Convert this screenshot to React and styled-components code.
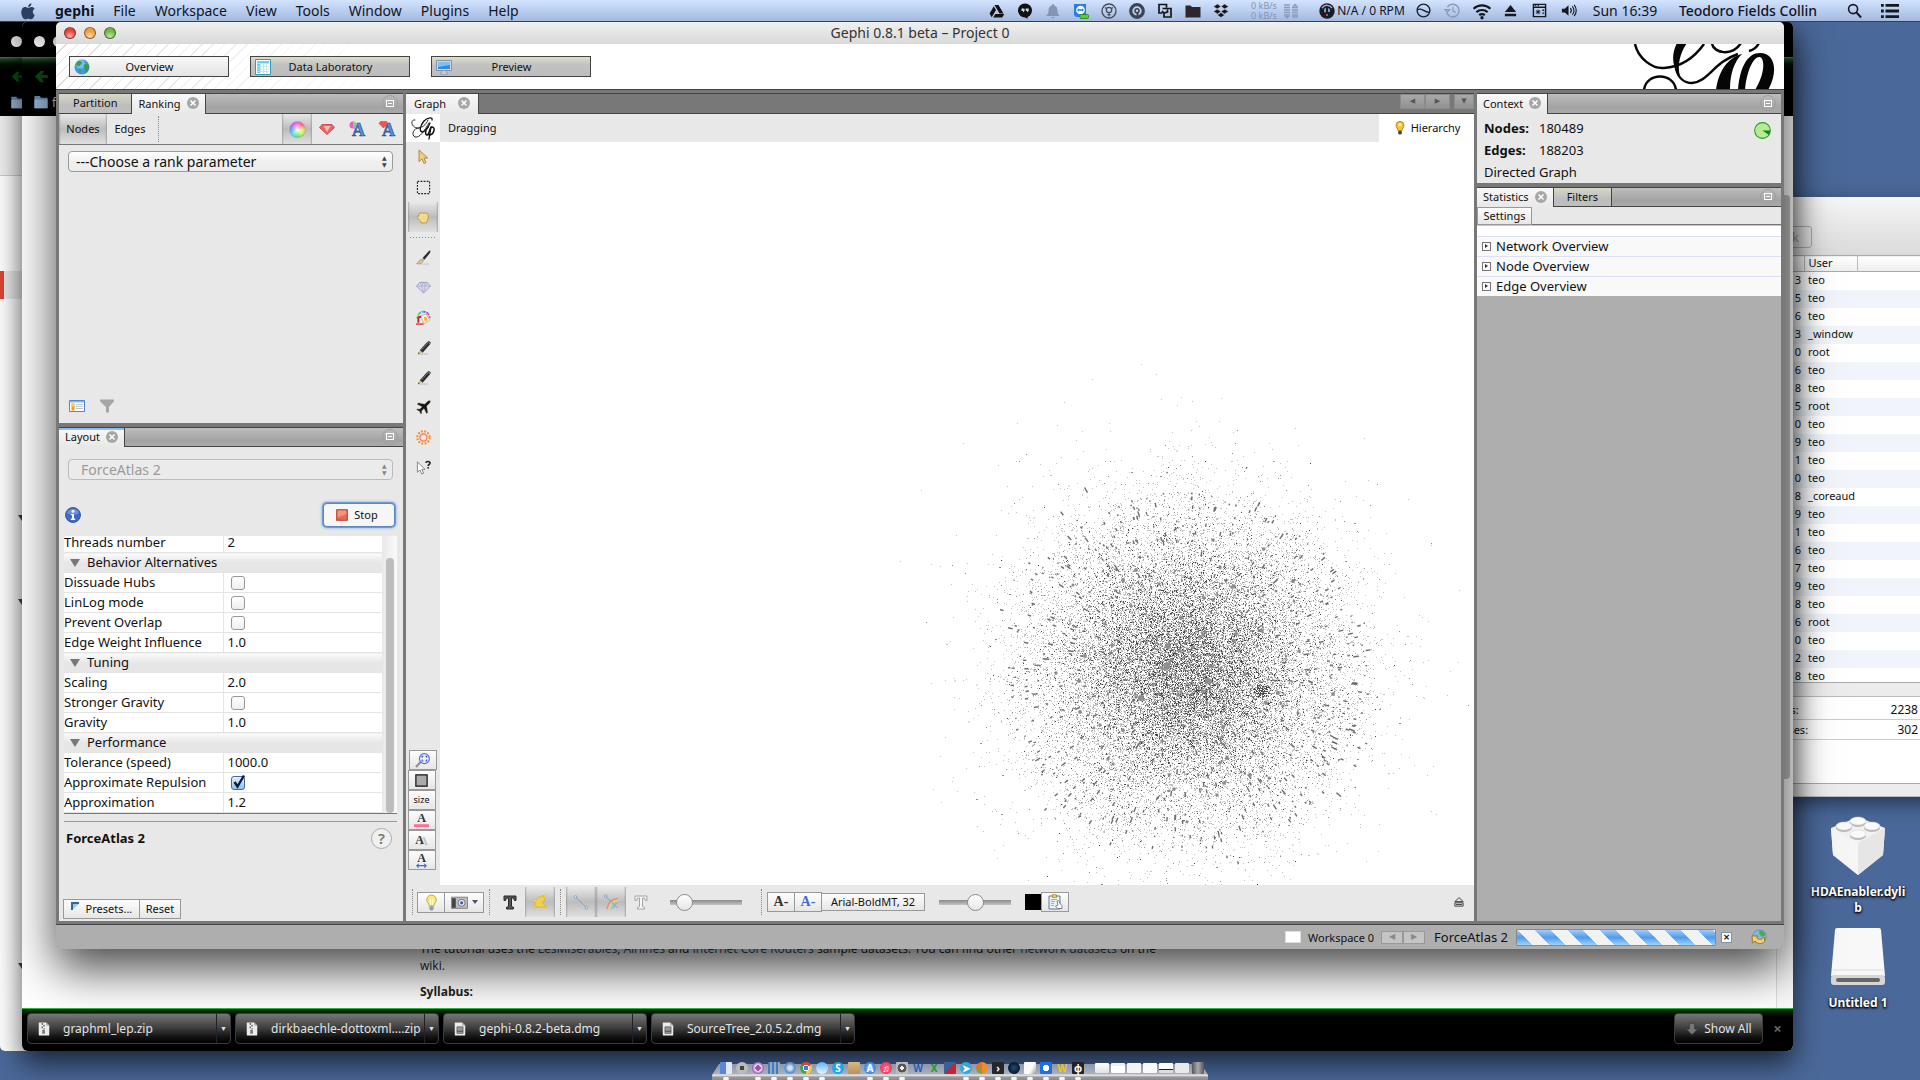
import React from "react";
import styled, { createGlobalStyle, css } from "styled-components";

const GlobalStyle = createGlobalStyle`
  *, *::before, *::after { box-sizing: border-box; }
  html, body { margin: 0; height: 100%; overflow: hidden; }
  body { font-family: "Noto Sans", "Open Sans", sans-serif; font-size: 13px; color: #111; background: #4a6899; }
  button, input, select { font: inherit; color: inherit; margin: 0; }
  button { padding: 0; border: 0; background: none; white-space: nowrap; }
  a { color: inherit; text-decoration: none; }
  p { margin: 0; }
`;

/* ---------- icon drawings, all on a 16 unit grid ---------- */
const penPath = (
  <>
    <path d="M2 15h11" stroke="#bbb" strokeWidth="1" />
    <path d="M4 11 12 2l3 2.500-8 9z" fill="#2c2c2c" />
    <path d="M5.500 11 13 3" stroke="#777" strokeWidth="1" />
    <path d="M12 2l1.500-1.300 2.500 2L15 4.500z" fill="#555" />
    <path d="M4 11l3 2.500L2 15z" fill="#dcc27c" />
    <path d="M3 13l1 1-2 1z" fill="#222" />
  </>
);

const glyphs = {
  apple: <path d="M11 1c-1.500.2-3 1.600-2.800 3.400C9.700 4.500 11.200 2.900 11 1zM14 11.500c-.9 2.300-2 3.900-3.400 3.900-1 0-1.300-.6-2.500-.6s-1.600.6-2.500.6C3.700 15.400 2 12 2 9c0-2.800 1.700-4.500 3.500-4.500 1.100 0 1.900.7 2.700.7s1.700-.8 3.100-.8c.9 0 2 .5 2.600 1.500-2.300 1.400-2 4.500.1 5.600z" fill="#2b3f5e" />,
  drive: <><path d="M5.500 2h4l5 8.500h-4zM4.800 3.300l2.200 3.700-4.300 7.300L.6 10.500zM6.300 11h9l-2.100 3.500H4.200z" fill="#111" /></>,
  hangouts: <><circle cx="8" cy="7.500" r="7" fill="#111" /><path d="M6.500 13h4v3z" fill="#111" /><path d="M4.500 5.500h3V8L6 9.500V8H4.500zM8.700 5.500h3V8l-1.500 1.500V8H8.700z" fill="#c8d8f0" /></>,
  bell: <><path d="M8 1c1 0 1.200.8 1.200 1.500C12 3.300 12.500 6 12.500 8c0 2.500 1 3.500 2.500 5H1c1.500-1.500 2.500-2.500 2.500-5 0-2 .5-4.700 3.300-5.500C6.800 1.800 7 1 8 1z" fill="#8596b4" /><path d="M6.300 14h3.400c-.3 1.700-3 1.700-3.400 0z" fill="#8596b4" /></>,
  teamviewer: <><path d="M1 1h12v13H3L1 12z" fill="#2b7fe0" /><circle cx="7.500" cy="7" r="4.300" fill="#fff" /><path d="M4 7l2-1.700v1h3v-1L11 7 9 8.700v-1H6v1z" fill="#2b7fe0" /><rect x="7" y="11.500" width="8.500" height="4" rx="1" fill="#5bd02c" stroke="#2b7d12" strokeWidth=".8" /></>,
  badge: <><circle cx="8" cy="8" r="7" fill="none" stroke="#454c5a" strokeWidth="1.300" /><circle cx="8" cy="7" r="2.700" fill="none" stroke="#454c5a" strokeWidth="1.200" /><path d="M4 4.500 6 6M12 4.500 10 6M8 10v3.500M6.300 11.800h3.400" stroke="#454c5a" strokeWidth="1.100" /></>,
  ring: <><circle cx="8" cy="8" r="6.300" fill="none" stroke="#3d434f" strokeWidth="3.200" /><circle cx="8" cy="7.800" r="2" fill="none" stroke="#3d434f" strokeWidth="1.500" /><path d="M8.500 9.500v4" stroke="#3d434f" strokeWidth="2" /></>,
  screens: <path d="M9.500 4.500V1.500H2V10h3.500M5.500 5.500h4v0H14V14H7V9.500M5 8l2 2 3.500-1V6.500" fill="none" stroke="#161616" strokeWidth="1.700" />,
  folder: <path d="M.5 2.500h5l1.500 1.500h8.500v10.500H.5z" fill="#2d262a" />,
  dropbox: <path d="M4.500 1 8 3.500 4.200 6 .5 3.500zM11.500 1 8 3.500 11.800 6l3.700-2.500zM4.200 6 8 8.500 4.500 11 .5 8.500zM11.800 6 8 8.500l3.500 2.500 4-2.500zM8 9.500l3.700 2.600L8 14.600l-3.700-2.500z" fill="#1b1518" stroke="#b9cbe9" strokeWidth=".6" />,
  net: <><path d="M1 2h6M1 4.500h6M1 7h6M1 9.500h6M1 12h6M9 4.500h6M9 7h6M9 9.500h6M9 12h6M9 14h6" stroke="#8b9cbc" strokeWidth="1.300" /><path d="M1 13h6l-3 3zM9 3.500h6l-3-3z" fill="#8b9cbc" /></>,
  orb: <><circle cx="8" cy="8" r="7.700" fill="#191c22" /><path d="M3 5c3-4 8-3 10 0" stroke="#aab" strokeWidth="1.500" fill="none" /><path d="M5 9V6l2-1.500v5zM9 9V5l2 1v3z" fill="#6f9de0" /><path d="M7 11h2v2H7z" fill="#c44" /></>,
  wave: <><circle cx="8" cy="8" r="6.800" fill="none" stroke="#1b212b" strokeWidth="1.500" /><path d="M1.500 7c5-2 6 2 12.500 3" stroke="#1b212b" strokeWidth="1.500" fill="none" /></>,
  clock: <><path d="M2.500 4.500a6.800 6.800 0 1 1-.6 6" fill="none" stroke="#8b99b3" strokeWidth="1.500" /><path d="M0 7h5L2.500 9.800zM8.500 4v4.500l3 1.500" fill="none" stroke="#8b99b3" strokeWidth="1.300" /></>,
  wifi: <><path d="M.5 6a11 11 0 0 1 15 0M3 9a7.500 7.500 0 0 1 10 0M5.500 11.700a4 4 0 0 1 5 0" stroke="#16181d" strokeWidth="1.900" fill="none" /><circle cx="8" cy="14" r="1.500" fill="#16181d" /></>,
  eject: <path d="M8 2l6 7.500H2zM2 11.500h12V14H2z" fill="#16181d" />,
  keys: <><path d="M1.500 1.500h13v13h-13zM1.500 4.500h13" fill="none" stroke="#16181d" strokeWidth="1.500" /><path d="M3 2.700h1.500M6 2.700h1.500M4 9.500h5M6.500 7v5M4.700 7.700l3.600 3.600M8.300 7.700l-3.600 3.600" stroke="#16181d" strokeWidth="1" /><path d="M11 7h2v1.500h-2zM11 10h2v1.500h-2z" fill="#16181d" /></>,
  volume: <><path d="M1 6h3l4-3.500v11L4 10H1z" fill="#16181d" /><path d="M10 5.500c1.300 1.500 1.300 3.500 0 5M12 3.500c2.500 2.500 2.500 6.500 0 9M14 2c3 3.500 3 8.500 0 12" stroke="#16181d" strokeWidth="1.200" fill="none" /></>,
  search: <><circle cx="6.500" cy="6.500" r="4.800" fill="none" stroke="#16181d" strokeWidth="1.700" /><path d="M10 10l5 5.500" stroke="#16181d" strokeWidth="2.200" /></>,
  list: <path d="M0 3h2.500M4 3h12M0 8h2.500M4 8h12M0 13h2.500M4 13h12" stroke="#16181d" strokeWidth="2.600" />,
  globe: <><circle cx="8" cy="8" r="7.500" fill="#3f9ae0" /><circle cx="6.500" cy="5" r="4.500" fill="#9bd4ff" opacity=".6" /><path d="M3 3c2-1.500 4-1 5 .5 0 2-2 2-2.500 3.500-1.500.5-3-.5-3.500-1.500zM9.500 6c2-1.500 4-1 5.500 0 .5 3-1 6-3 8-1.500-1.500-.5-3-1.500-4.500zM4 10l3 1-1 3.500z" fill="#3c9d45" /></>,
  table: <><path d="M.5.5h15v15H.5z" fill="#fff" stroke="#3a9ab5" /><path d="M2 2h12v2.500H2zM2 5h3v9H2z" fill="#5fd4f4" /><path d="M5.500 5v9M8.500 5v9M11.500 5v9M2 7.500h12M2 10h12M2 12.500h12" stroke="#bfe3f2" strokeWidth=".9" /></>,
  monitor: <><path d="M.5 1.500h15v10H.5z" fill="#cfd6de" stroke="#8892a0" /><path d="M2 3h12v7H2z" fill="#2f8de0" /><path d="M2 3h12v3L2 8z" fill="#7cc0f7" /><path d="M6 11.500h4V14h1.500v1.500h-7V14H6z" fill="#c9ced6" stroke="#8d949c" strokeWidth=".6" /></>,
  gemRed: <><path d="M3 3.500h10l2.500 3L8 13.500.5 6.500z" fill="#f06464" stroke="#c93a3a" strokeWidth=".8" /><path d="M4.500 5h7L8 11z" fill="#ffb9b9" /></>,
  gem: <><path d="M4 2.500h8l3.500 4L8 14 .5 6.500z" fill="#d5d6ee" stroke="#8e90ae" strokeWidth=".8" /><path d="M.5 6.500h15M4 2.500l2 4L8 14l2-7.500 2-4M6 6.500l2-4 2 4" stroke="#a5a7c6" strokeWidth=".7" fill="none" /></>,
  labelColor: <><text x="3" y="15" fontFamily="Liberation Serif" fontSize="18" fontWeight="700" fill="#5c8fd8" stroke="#234f94" strokeWidth=".7">A</text><circle cx="4" cy="4" r="3.500" fill="#f060b0" /><path d="M4 .5A3.500 3.500 0 0 1 7.500 4H4z" fill="#7be07b" /><path d="M7.500 4A3.500 3.500 0 0 1 4 7.500V4z" fill="#6fb9ff" /></>,
  labelSize: <><text x="3" y="15" fontFamily="Liberation Serif" fontSize="18" fontWeight="700" fill="#5c8fd8" stroke="#234f94" strokeWidth=".7">A</text><path d="M1.500.5h6L9 2.500 4.500 7 0 2.500z" fill="#ee5555" stroke="#c33" strokeWidth=".5" /></>,
  tableSmall: <><path d="M.5 2.500h15v11H.5z" fill="#fff" stroke="#4f86cc" /><path d="M1 3h14v1.500H1z" fill="#8db7ef" /><path d="M2.500 5.500h3v7h-3z" fill="#ff9a1c" /><path d="M2.500 5.500h3v3h-3z" fill="#ffd23e" /><path d="M7 6.500h7M7 8.500h7M7 10.500h7" stroke="#b6bcc6" strokeWidth=".9" /></>,
  funnel: <path d="M1 1.500h14v1.700L10 9v5.500H7V9L1 3.200z" fill="#a5a5a5" />,
  info: <><circle cx="8" cy="8" r="7.500" fill="#3e6cc4" stroke="#27488f" strokeWidth=".8" /><path d="M2 6a6.500 6.500 0 0 1 12 0c-3 2-9 2-12 0z" fill="#7ea2e4" opacity=".7" /><circle cx="8" cy="4.200" r="1.500" fill="#fff" /><path d="M6 7h3v4.500h1.200V13H5.800v-1.500H7V8.300H6z" fill="#fff" /></>,
  stop: <><path d="M1 1h14v14H1z" fill="#ea6a52" stroke="#b43a28" strokeWidth="1.500" /><path d="M2 2h12v5L2 11z" fill="#f7a593" opacity=".7" /></>,
  arrow: <path d="M4 1v11.500l3-2.500 2 4.500 2-1-2-4.200 3.700-.3z" fill="#f0cf7c" stroke="#a9803a" strokeWidth=".9" />,
  marquee: <path d="M1.500 1.500h13v13h-13z" fill="none" stroke="#222" strokeWidth="1.200" strokeDasharray="2 1.300" />,
  hand: <path d="M3 4.500c.5-2 2.300-1.600 2.600-.7.300-1.500 2.300-1.500 2.600 0 .4-1.300 2.200-1.200 2.500.2.700-1 2.300-.6 2.300.8v3c0 3-1.500 3.500-1.500 6H5.500c0-2-1.500-2.300-3-4.300C1 7.500 1 6 3 6.500z" fill="#f2d98c" stroke="#b58e42" strokeWidth=".9" />,
  brush: <><path d="M2 15h12" stroke="#c4c4c4" strokeWidth="1" /><path d="M15.500.5 14 .8 7 8.500l2 2L15 3z" fill="#2b2b2b" /><path d="M7 8.500l2 2-1.500 1.700-2-2z" fill="#a9b3bb" /><path d="M5.500 10.200l2 2C6 15 3 14.800.5 14.500c2-1 2.500-4 5-4.300z" fill="#d8c391" stroke="#8d7a4b" strokeWidth=".5" /></>,
  bucket: <><g fill="none" strokeWidth="2" strokeDasharray="2.200 1"><path d="M1.500 9a6.500 6.500 0 0 1 1.800-5" stroke="#5fd24e" /><path d="M3.300 4A6.500 6.500 0 0 1 8 1.800" stroke="#3fb4d8" /><path d="M8 1.800a6.500 6.500 0 0 1 4.700 2" stroke="#7a5cd6" /><path d="M12.700 3.800A6.500 6.500 0 0 1 14.500 9" stroke="#e04ab4" /></g><path d="M5 6l6-1.500 3.500 6.500-6 3.500z" fill="#fffbe6" stroke="#a88" strokeWidth=".6" /><path d="M8 7.500l3-.5 1.500 4-3 1.500z" fill="#edb73b" /><path d="M1.500 7l4-1v2L3.500 9v4.500H1.500z" fill="#c22" /><path d="M0 15h8" stroke="#d33" strokeWidth="1.500" /></>,
  pencil: penPath,
  plane: <path d="M15.300.8c-.8-.8-2.300-.2-3.200.7L9.300 4.300 2.500 3 1 4.500l5.300 2.800L4 9.700l-2.500-.3L.5 10.500l3 1.500 1.700 3.200 1.200-1-.4-2.600 2.500-2.300 2.700 5.400 1.500-1.500-1.200-6.700 2.800-2.800c.8-.9 1.700-2.100 1-2.900z" fill="#161616" stroke="#d9cf9a" strokeWidth=".4" />,
  heat: <><circle cx="8" cy="8" r="6.600" fill="none" stroke="#ff8a26" strokeWidth="2.200" strokeDasharray="2 1.450" /><circle cx="8" cy="8" r="3.800" fill="none" stroke="#ff7040" strokeWidth="1.300" /></>,
  help: <><path d="M1.500 2v11l2.800-2.300L6.200 15l2-1-2-4h3.500z" fill="#fff" stroke="#777" strokeWidth=".9" /><path d="M10.500 3c.3-2 4.500-2 4.500.3 0 1.500-2 1.500-2 3M13 7.500V9" fill="none" stroke="#222" strokeWidth="1.700" /></>,
  zoomFit: <><path d="M1 15l5.500-6" stroke="#8e8e8e" strokeWidth="2.200" /><circle cx="10" cy="6" r="5.300" fill="#edf2ff" stroke="#5674d6" strokeWidth="1.300" /><path d="M7.500 5V3.500H9M11 3.500h1.500V5M12.500 7v1.500H11M9 8.500H7.500V7" fill="none" stroke="#2f53cc" strokeWidth="1.100" /></>,
  square: <path d="M2 2h12v12H2z" fill="#aaa" stroke="#111" strokeWidth="1.300" />,
  aPink: <><text x="3.500" y="10" fontFamily="Liberation Serif" fontSize="13" fontWeight="700" fill="#333">A</text><path d="M0 12h16v3H0z" fill="#ff6b93" /></>,
  aSize: <><text x="3.500" y="10" fontFamily="Liberation Serif" fontSize="13" fontWeight="700" fill="#333">A</text><path d="M3 13.500h10M5 11.500l-2 2 2 2M11 11.500l2 2-2 2" fill="none" stroke="#4268d8" strokeWidth="1.200" /></>,
  bulb: <><path d="M8 1a4.500 4.500 0 0 0-4.500 4.500C3.500 8 5.500 8.500 5.800 11h4.400c.3-2.500 2.300-3 2.300-5.500A4.500 4.500 0 0 0 8 1z" fill="#f7ea7e" stroke="#b8a233" strokeWidth=".8" /><path d="M7 5v5.500M9 5v5.500" stroke="#fffbd0" strokeWidth="1" /><path d="M6 11.500h4V14l-1 1.500H7L6 14z" fill="#9a9a9a" /></>,
  bulbGold: <><path d="M8 .5A4.500 4.500 0 0 0 3.500 5C3.500 7.500 5.500 8.500 5.800 11h4.400c.3-2.500 2.300-3.500 2.300-6A4.500 4.500 0 0 0 8 .5z" fill="#f6c53a" stroke="#94700f" strokeWidth=".9" /><path d="M8 2.500c-1.500 0-2 1.500-2 3h4c0-1.500-.5-3-2-3z" fill="#fff1a8" /><path d="M6 11.500h4V14l-1 1.500H7L6 14z" fill="#444" /></>,
  camera: <><path d="M.5 3h15v10.500H.5z" fill="#bdbdbd" stroke="#777" strokeWidth=".8" /><path d="M1 4h3.500v9H1z" fill="#444" /><circle cx="10" cy="8.300" r="3.300" fill="#e6e8f4" stroke="#667" strokeWidth=".8" /><circle cx="10" cy="8.300" r="1.500" fill="#4957a8" /></>,
  bigT: <path d="M2 2h12v4.500h-1.500L11.500 4H9.500v8.500l2 .8V15h-7v-1.700l2-.8V4h-2l-1 2.500H2z" fill="#555" stroke="#2b2b2b" strokeWidth="1" />,
  ghostT: <path d="M2 2h12v4.500h-1.500L11.500 4H9.500v8.500l2 .8V15h-7v-1.700l2-.8V4h-2l-1 2.500H2z" fill="#f6f6f6" stroke="#a4a4a4" strokeWidth="1" />,
  hull: <><path d="M6 3.500l6-2 1 5-3 1.500 4 5H3V7z" fill="#eed154" stroke="#dfb92e" strokeWidth="1" /><g fill="#f8e89a" stroke="#d3a51e" strokeWidth=".6"><circle cx="3" cy="6.500" r="1.200" /><circle cx="12.500" cy="2" r="1.200" /><circle cx="14" cy="13" r="1.200" /><circle cx="3" cy="13" r="1.200" /></g></>,
  edge: <><path d="M2.500 3l11 10.500" stroke="#7da2c4" strokeWidth="1" /><circle cx="2.500" cy="3" r="1.400" fill="#cfe4f6" stroke="#6d9bc4" strokeWidth=".8" /><circle cx="13.500" cy="13.500" r="1.400" fill="#cfe4f6" stroke="#6d9bc4" strokeWidth=".8" /></>,
  rainbowEdge: <><g fill="none" strokeWidth="1.500"><path d="M4 15C5 9 9 5 15 4.500" stroke="#e78a86" /><path d="M6 15c1-5 4-8.500 9-9" stroke="#edd27e" /><path d="M8 15c1-4 3-7 7-7.500" stroke="#9fd69a" /><path d="M10 15c.5-3 2-5.500 5-6" stroke="#96b7e6" /></g><path d="M2.500 2l12 12" stroke="#7da2c4" strokeWidth="1" /><circle cx="2.500" cy="2" r="1.300" fill="#cfe4f6" stroke="#6d9bc4" strokeWidth=".8" /></>,
  clipboard: <><path d="M2 2h11v13H2z" fill="#e9f0f8" stroke="#5f7898" strokeWidth="1" /><path d="M5.500.8h4v2.500h-4z" fill="#f6dc8d" stroke="#b98a22" strokeWidth="1" /><path d="M4 5.500h6M4 7.500h4M4 9.500h3M4 11.500h3" stroke="#8fa7c4" strokeWidth=".9" /><path d="M10 7c1.500-.8 3 .3 2.500 2l2.500 2.500v3h-4.500l-2-2.500 2.500-.8z" fill="#fff" stroke="#6c7684" strokeWidth=".9" /></>,
  pullUp: <path d="M8 2l5.500 5.500h-11zM2.500 9h11v4.500h-11zM4 11.300h8" fill="#ddd" stroke="#45454c" strokeWidth="1.300" />,
  pie: <><circle cx="8" cy="8" r="7.400" fill="#b6eb92" stroke="#2c9b2c" strokeWidth="1" /><path d="M8 8h7.200a7 7 0 0 1-1.500 4z" fill="#127e1d" /></>,
  refresh: <><circle cx="8.500" cy="7.500" r="6.800" fill="#82b7dc" stroke="#54829e" strokeWidth=".6" /><path d="M8 1.500c3-.5 6 1.500 6.500 4.500L11 8 8.500 5z" fill="#4da84b" /><path d="M1 7h6L5.500 8.800C8 11 11 11 13.500 8v4.500c-2.500 3-6.500 3-9.500-.5L1.500 14z" fill="#f1cd76" stroke="#9c7320" strokeWidth=".9" /></>,
  file: <><path d="M2 .5h8.500L14 4v11.500H2z" fill="#ececec" /><path d="M10.500.5V4H14z" fill="#aaa" /><path d="M6 1v2M8 3v2M6 5v2M8 7v1.500" stroke="#666" strokeWidth="1.600" /><path d="M6 9h3v4.500H6z" fill="#777" /></>,
  disk: <><path d="M2 .5h8.500L14 4v11.500H2z" fill="#ececec" /><path d="M10.500.5V4H14z" fill="#aaa" /><path d="M4.500 5.500h7V13h-7z" fill="#999" stroke="#555" strokeWidth=".8" /><path d="M4.500 10.500h7" stroke="#444" /></>,
  downArrow: <path d="M5 1.500h6V8h3.500L8 14.500 1.500 8H5z" fill="#777" stroke="#333" strokeWidth=".7" />,
  back: <path d="M15 6.500H8L11 2H7L1 8l6 6h4L8 9.500h7z" fill="#06500f" />,
  bookFolder: <><path d="M.5 1h6L8 3h7.500v12H.5z" fill="#6f94bd" /><path d="M.5 5h15v10H.5z" fill="#9dbcdd" /></>,
};

const Svg = styled.svg`
  display: block;
  flex: none;
  overflow: visible;
  width: ${(p) => p.$size || 16}px;
  height: ${(p) => p.$size || 16}px;
`;
const Icon = ({ name, size }) => (
  <Svg $size={size} viewBox="0 0 16 16" aria-hidden="true">
    {glyphs[name]}
  </Svg>
);

/* ---------- menu bar ---------- */
const MenuBar = styled.header`
  position: relative;
  z-index: 5;
  display: flex;
  align-items: center;
  height: 22px;
  padding-left: 19px;
  font-size: 14px;
  line-height: 20px;
  color: #10151f;
  background: linear-gradient(#d3e3ff, #bfd2f3 40%, #a3b9dc);
  border-bottom: 1px solid #2f4263;
`;
const MenuList = styled.nav`
  display: flex;
  gap: 19px;
  padding-left: 18px;
`;
const MenuItem = styled.button`
  font-weight: ${(p) => (p.$strong ? 700 : 400)};
`;
const StatusItems = styled.div`
  display: flex;
  align-items: center;
  margin-left: auto;
`;
const Slot = styled.span`
  display: flex;
  align-items: center;
  justify-content: center;
  gap: ${(p) => p.$gap || 0}px;
  width: ${(p) => p.$w}px;
  white-space: nowrap;
  font-size: ${(p) => p.$font || 14}px;
  font-weight: ${(p) => (p.$strong ? 500 : 400)};
`;
const Rates = styled.span`
  display: flex;
  flex-direction: column;
  font: 9px/10px "Noto Sans", sans-serif;
  color: #8394b5;
`;

/* ---------- background windows ---------- */
const Desktop = styled.main`
  position: relative;
  height: calc(100vh - 22px);
  min-height: 700px;
  overflow: hidden;
`;
const Window = styled.section`
  position: absolute;
  display: flex;
  flex-direction: column;
  overflow: hidden;
`;
const BackWindow = styled(Window)`
  top: 0;
  left: 0;
  width: 400px;
  bottom: 29px;
  background: #fff;
  border-radius: 0 0 5px 5px;
`;
const BrowserWindow = styled(Window)`
  top: 0;
  left: 22px;
  right: 127px;
  bottom: 29px;
  background: #fff;
  border-radius: 5px 5px 6px 6px;
  box-shadow: 0 12px 28px rgba(0, 0, 0, 0.65);
`;
const DarkHead = styled.div`
  flex: none;
  height: 94px;
  padding-left: ${(p) => p.$pad}px;
  background: linear-gradient(#000 35px, #6d6d6d 35px, #1c4a1c 37px, #021002 42px, #000 50px);
`;
const HeadRow = styled.div`
  display: flex;
  align-items: center;
  gap: ${(p) => p.$gap}px;
  height: ${(p) => p.$h}px;
  color: #ddd;
  font-size: 12px;
`;
const Dot = styled.i`
  width: 11px;
  height: 11px;
  border-radius: 50%;
  background: linear-gradient(#ddd, #fff);
`;
const BackToolbar = styled.div`
  height: 60px;
  background: #efefef;
  border-bottom: 1px solid #ccc;
`;
const BackBody = styled.div`
  display: flex;
  flex-direction: column;
  flex: 1;
  padding-top: 95px;
`;
const RedMark = styled.div`
  height: 28px;
  border-left: 4px solid #dc4437;
  background: #e8e8e8;
  flex: none;
`;
const Outline = styled.div`
  display: flex;
  flex-direction: column;
  padding: 216px 0 0 18px;
`;
const OutlineMark = styled.i`
  width: 8px;
  height: 6px;
  margin-bottom: ${(p) => p.$after}px;
  border: 4px solid transparent;
  border-top: 6px solid #444;
  border-bottom: 0;
`;
const BrowserPage = styled.div`
  display: flex;
  flex: 1;
  min-height: 0;
  align-items: stretch;
`;
const Article = styled.article`
  display: flex;
  flex: 1;
  flex-direction: column;
  justify-content: flex-end;
  padding: 0 0 8px 398px;
  font-family: "Open Sans", sans-serif;
  font-size: 12px;
  line-height: 17px;
  color: #222;
  p + p { margin-top: 9px; }
  a { color: #1a5276; }
`;
const PageScroll = styled.div`
  width: 17px;
  padding-top: 79px;
  border-left: 1px solid #ddd;
  background: #fafafa;
  &::before {
    content: "";
    display: block;
    width: 8px;
    height: 584px;
    margin-left: 5px;
    border-radius: 4px;
    background: #bdbdbd;
  }
`;
const DownloadBar = styled.footer`
  display: flex;
  flex: none;
  gap: 4px;
  height: 43px;
  padding: 4px 5px;
  background: linear-gradient(#063c0b, #000 8px);
  border-top: 1px solid #2fb53f;
`;
const darkButton = css`
  height: 31px;
  color: #e4e4e4;
  font-size: 12px;
  border: 1px solid #3d3d3d;
  border-radius: 4px;
  background: linear-gradient(#787878, #3c3c3c 50%, #111 80%, #000);
`;
const Download = styled.div`
  display: flex;
  width: 204px;
  ${darkButton}
`;
const DownloadName = styled.button`
  display: flex;
  flex: 1;
  align-items: center;
  gap: 12px;
  padding-left: 9px;
`;
const DownloadMore = styled.button`
  width: 14px;
  font-size: 7px;
  border-left: 1px solid #222;
`;
const ShowAll = styled.button`
  display: flex;
  align-items: center;
  justify-content: center;
  gap: 5px;
  width: 89px;
  margin-left: auto;
  ${darkButton}
`;
const CloseBar = styled.button`
  width: 21px;
  padding-bottom: 4px;
  color: #666;
  font-size: 15px;
  font-weight: 700;
`;

const MonitorWindow = styled(Window)`
  top: 175px;
  right: -60px;
  width: 260px;
  height: 600px;
  background: #fff;
  font-size: 11px;
  box-shadow: 0 6px 18px rgba(0, 0, 0, 0.5);
`;
const MonitorHead = styled.div`
  flex: none;
  height: 58px;
  padding: 29px 0 0 14px;
  background: linear-gradient(#f6f6f6, #dadada);
  button { width: 78px; height: 22px; text-align: right; padding-right: 12px; color: #999; font-size: 13px; border: 1px solid #aaa; border-radius: 3px; }
`;
const ProcessList = styled.div`
  flex: none;
  height: 427px;
  overflow: hidden;
`;
const ProcessTable = styled.table`
  border-collapse: collapse;
  table-layout: fixed;
  width: 100%;
  thead tr { height: 16px; background: linear-gradient(#fff, #eee); border-top: 1px solid #aaa; border-bottom: 1px solid #aaa; }
  tbody tr { height: 18px; }
  tbody tr:nth-child(even) { background: #f1f5fb; }
  th { font-weight: 400; text-align: left; padding: 0 0 1px 4px; border-right: 1px solid #bbb; line-height: 14px; }
  td { padding: 0 0 2px 4px; line-height: 14px; }
  td:first-child { padding: 0 3px 2px 0; text-align: right; }
`;
const Strip = styled.div`
  flex: none;
  height: ${(p) => p.$h}px;
  background: #ececec;
  border-top: 1px solid #aaa;
  border-bottom: 1px solid #bbb;
`;
const Totals = styled.dl`
  flex: 1;
  margin: 0;
  padding-top: 3px;
  div { display: flex; justify-content: space-between; height: 20px; padding: 0 62px 0 34px; align-items: center; border-bottom: 1px solid #ccc; }
  dd { margin: 0; font-size: 12px; }
`;

const DesktopIcons = styled.aside`
  position: absolute;
  top: 793px;
  right: 9px;
  width: 106px;
  display: flex;
  flex-direction: column;
  align-items: center;
  gap: 10px;
`;
const DesktopIcon = styled.button`
  display: flex;
  flex-direction: column;
  align-items: center;
  gap: 7px;
  width: 100px;
  white-space: normal;
  word-break: break-all;
  color: #fff;
  font-size: 12px;
  line-height: 16px;
  font-weight: 700;
  text-shadow: 0 1px 2px #000, 0 1px 3px #000;
`;

/* ---------- gephi window ---------- */
const GephiWindow = styled(Window)`
  top: 0;
  left: 56px;
  right: 136px;
  bottom: 131px;
  background: #787878;
  border-radius: 5px 5px 2px 2px;
`;
const GephiShadow = styled.div`
  position: absolute;
  top: 0;
  left: 56px;
  right: 136px;
  bottom: 131px;
  box-shadow: 0 20px 44px rgba(0, 0, 0, 0.72);
`;
const TitleBar = styled.div`
  display: flex;
  flex: none;
  align-items: center;
  height: 22px;
  padding: 0 8px;
  background: linear-gradient(#f0f0f0, #d9d9d9);
`;
const Lights = styled.div`
  display: flex;
  flex: 1;
  gap: 8px;
`;
const Light = styled.button`
  width: 12px;
  height: 12px;
  border-radius: 50%;
  border: 1px solid rgba(60, 30, 20, 0.55);
  background: radial-gradient(circle at 50% 85%, #fff9 0, transparent 60%), ${(p) => p.$c};
`;
const Title = styled.h1`
  margin: 0;
  font-size: 14px;
  line-height: 20px;
  font-weight: 400;
  color: #333;
`;
const Banner = styled.div`
  display: flex;
  flex: none;
  align-items: center;
  gap: 21px;
  height: 46px;
  padding-left: 13px;
  background: linear-gradient(90deg, transparent, #fff 340px),
    repeating-linear-gradient(135deg, #fff 0 7px, #ddd 7px 8px);
  border-bottom: 1px solid #444;
`;
const ModeButton = styled.button`
  display: flex;
  align-items: center;
  width: 160px;
  height: 21px;
  padding: 0 4px;
  font-size: 11px;
  border: 1px solid #444;
  background: ${(p) => (p.$on ? "linear-gradient(#f8f8f8, #e4e4e4)" : "linear-gradient(#dcdfca, #c2c2c2 40%, #bcbcbc)")};
  span { flex: 1; padding-right: 15px; text-align: center; }
`;
const BannerLogo = styled.svg`
  width: 150px;
  height: 45px;
  margin-left: auto;
  margin-right: 4px;
`;
const Workspace = styled.div`
  display: flex;
  flex: 1;
  min-height: 0;
  gap: 3px;
  padding: 3px;
`;
const Column = styled.div`
  display: flex;
  flex-direction: column;
  flex: ${(p) => (p.$w ? "none" : 1)};
  width: ${(p) => (p.$w ? p.$w + "px" : "auto")};
  min-width: 0;
  gap: 4px;
`;
const Panel = styled.section`
  display: flex;
  flex-direction: column;
  flex: ${(p) => (p.$h ? "none" : 1)};
  height: ${(p) => (p.$h ? p.$h + "px" : "auto")};
  min-height: 0;
  background: #e8e8e8;
`;
const TabBar = styled.div`
  display: flex;
  flex: none;
  height: ${(p) => p.$h || 21}px;
  border-top: 1px solid #444;
  border-bottom: 1px solid #444;
  background: ${(p) => (p.$flat ? "#787878" : "linear-gradient(#bdbdbd, #a3a3a3 70%, #aaa)")};
`;
const Tab = styled.button`
  display: flex;
  align-items: center;
  gap: 6px;
  margin-bottom: ${(p) => (p.$on ? -1 : 0)}px;
  padding: 0 ${(p) => p.$pad || 6}px 2px;
  font-size: 11px;
  border-right: 1px solid #444;
  background: ${(p) => (p.$on ? "linear-gradient(#f8f8f8, #e8e8e8)" : "linear-gradient(#d6d8c6, #bebebe 60%)")};
  ${(p) => p.$accent && "box-shadow: inset 0 2px #8fbdf0;"}
`;
const CloseDot = styled.i`
  display: grid;
  place-items: center;
  width: 12px;
  height: 12px;
  border-radius: 50%;
  background: #a6a6a6;
`;
const Close = () => (
  <CloseDot>
    <Svg $size={6} viewBox="0 0 6 6"><path d="M.5.5l5 5M5.500.5l-5 5" stroke="#fff" strokeWidth="1.500" /></Svg>
  </CloseDot>
);
const Restore = styled.button`
  display: grid;
  place-items: center;
  align-self: center;
  width: 16px;
  height: 16px;
  margin: 0 5px 1px auto;
  border-radius: 50%;
  border: 1px solid #a0a0a0;
  &::before { content: ""; width: 8px; height: 7px; border: 1px solid #fff; background: linear-gradient(#fff, #fff) center / 4px 1px no-repeat; }
`;
const RestoreButton = () => <Restore aria-label="Restore" />;
const Row = styled.div`
  display: flex;
  flex: none;
  align-items: center;
  height: ${(p) => p.$h}px;
  padding: ${(p) => p.$p || 0};
  gap: ${(p) => p.$gap || 0}px;
  ${(p) => p.$line && "border-bottom: 1px solid #777;"}
`;
const Toggle = styled.button`
  display: grid;
  place-items: center;
  width: ${(p) => p.$w || 30}px;
  height: 30px;
  flex: none;
  padding-bottom: ${(p) => (p.$w ? 2 : 0)}px;
  font-size: 11px;
  ${(p) =>
    p.$on &&
    css`
      background: linear-gradient(90deg, #8889 0, transparent 2px calc(100% - 2px), #8889), linear-gradient(#e8e8e8, #bcbcbc 50%, #e0e0e0);
    `}
`;
const Dotted = styled.i`
  flex: none;
  height: 26px;
  border-left: 1px dotted #888;
  margin: 0 ${(p) => p.$m || 0}px;
`;
const Push = styled.span`
  margin-left: auto;
`;
const Gap = styled.span`
  flex: none;
  width: ${(p) => p.$w}px;
`;
const ListActions = styled.div`
  display: flex;
  gap: 14px;
  margin-top: auto;
  padding: 0 0 9px 10px;
`;
const Wheel = styled.i`
  width: 17px;
  height: 17px;
  border-radius: 50%;
  border: 1px solid #aaa;
  background: radial-gradient(#fff, transparent 70%),
    conic-gradient(#f4e, #f55, #fc4, #af4, #4e6, #4df, #58f, #a5f, #f4e);
`;
const SelectWrap = styled.label`
  position: relative;
  display: block;
  margin: ${(p) => p.$m};
  &::after {
    content: "▲ ▼";
    position: absolute;
    right: 5px;
    top: 3px;
    width: 6px;
    font: 6px/7px "DejaVu Sans", sans-serif;
    color: ${(p) => (p.$off ? "#888" : "#444")};
    pointer-events: none;
  }
`;
const Select = styled.select`
  display: block;
  appearance: none;
  width: 100%;
  height: 21px;
  padding: 0 ${(p) => p.$pad}px;
  font-size: 14px;
  line-height: 19px;
  border: 1px solid #9a9a9a;
  border-radius: 4px;
  background: linear-gradient(#fff, #f0f0f0 50%, #ebebeb);
  &:disabled { color: #9a9a9a; opacity: 1; border-color: #bbb; background: #ebebeb; }
`;
const StopButton = styled.button`
  display: flex;
  align-items: center;
  justify-content: center;
  gap: 6px;
  width: 72px;
  height: 24px;
  margin-left: auto;
  padding-right: 4px;
  font-size: 11px;
  border: 1px solid #5a87c0;
  border-radius: 4px;
  background: #f6f6f6;
  box-shadow: 0 0 0 1px #6f9bd1, 0 0 3px 1px #7aa6dc;
`;
const PropertyPane = styled.div`
  display: flex;
  height: 278px;
  margin: 0 6px 0 5px;
  border-bottom: 1px solid #4a78d4;
`;
const PropertyClip = styled.div`
  display: flex;
  flex: 1;
  flex-direction: column;
  justify-content: flex-end;
  overflow: hidden;
`;
const PropertyTable = styled.table`
  flex: none;
  width: 100%;
  border-collapse: collapse;
  table-layout: fixed;
  background: #fff;
  tr { height: 20px; }
  th, td { padding: 0; font-weight: 400; text-align: left; line-height: 19px; border-bottom: 1px solid #e4e4e4; }
  td { padding-left: 4px; border-left: 1px solid #e4e4e4; }
  th[colspan] { background: linear-gradient(#fbfbfb, #e6e6e6 50%); }
`;
const GroupButton = styled.button`
  display: flex;
  align-items: center;
  gap: 7px;
  height: 19px;
  padding-left: 6px;
  &::before { content: ""; border: 5px solid transparent; border-top: 8px solid #777; border-bottom: 0; }
`;
const Check = styled.input`
  appearance: none;
  display: block;
  width: 14px;
  height: 14px;
  margin: 0 0 0 3px;
  border: 1px solid #999;
  border-radius: 3px;
  background: linear-gradient(#fff, #eee);
  &:checked { border-color: #456ba8; background: linear-gradient(#e6f1ff, #8fc0f5); }
`;
const CheckCell = styled.label`
  display: flex;
  align-items: center;
  position: relative;
  svg { position: absolute; left: 3px; top: -2px; pointer-events: none; }
`;
const PaneScroll = styled.div`
  width: 15px;
  padding: 22px 3px 0 4px;
  background: linear-gradient(90deg, #e8e8e8, #fafafa);
  &::before { content: ""; display: block; width: 8px; height: 255px; border-radius: 4px; background: #bdbdbd; }
`;
const Description = styled.div`
  display: flex;
  flex: 1;
  align-items: flex-start;
  justify-content: space-between;
  margin: 7px 6px 0 5px;
  padding: 6px 5px 6px 2px;
  border-top: 1px solid #999;
  strong { line-height: 20px; }
`;
const HelpButton = styled.button`
  width: 21px;
  height: 21px;
  border: 1px solid #aaa;
  border-radius: 50%;
  font-weight: 600;
  font-size: 15px;
  line-height: 19px;
  color: #777;
  background: #f0f0f0;
`;
const SmallButton = styled.button`
  display: flex;
  align-items: center;
  justify-content: center;
  gap: 4px;
  flex: none;
  width: ${(p) => p.$w}px;
  height: ${(p) => p.$h || 20}px;
  font-size: ${(p) => p.$font || 11}px;
  line-height: 16px;
  border: 1px solid #999;
  background: linear-gradient(#fdfdfd, #e6e6e6);
  & + & { margin-left: ${(p) => (p.$stack ? 0 : -1)}px; }
`;
const Corner = styled.i`
  align-self: flex-start;
  margin-top: 2px;
  width: 8px;
  height: 8px;
  border-top: 2px solid #2b6aa8;
  border-left: 2px solid #2b6aa8;
  background: linear-gradient(135deg, #9cc8ef 45%, transparent 45%);
`;

/* ---------- graph area ---------- */
const NavButton = styled.button`
  width: ${(p) => p.$w || 25}px;
  height: 15px;
  margin-left: ${(p) => p.$ml || 0}px;
  font: 7px/13px "DejaVu Sans", sans-serif;
  color: #555;
  border: 1px solid #8b8b8b;
  background: linear-gradient(#a8a8a8, #929292);
`;
const GraphBody = styled.div`
  display: flex;
  flex: 1;
  min-height: 0;
`;
const ToolStrip = styled.div`
  display: flex;
  flex: none;
  flex-direction: column;
  align-items: center;
  width: 34px;
  button, span { flex: none; }
`;
const LogoCell = styled.div`
  flex: none;
  width: 34px;
  height: 28px;
  background: #fff;
`;
const ToolDots = styled.i`
  flex: none;
  width: 26px;
  height: 10px;
  background: linear-gradient(90deg, #888 1px, transparent 1px) 0 5px / 3px 1px repeat-x;
`;
const StripButtons = styled.div`
  display: flex;
  flex-direction: column;
  margin: auto 1px 15px 0;
`;
const GraphMain = styled.div`
  display: flex;
  flex: 1;
  flex-direction: column;
  min-width: 0;
`;
const GraphStatus = styled.div`
  display: flex;
  flex: none;
  align-items: center;
  justify-content: space-between;
  height: 28px;
  padding-left: 8px;
  font-size: 11px;
  span { padding-bottom: 1px; }
`;
const Hierarchy = styled.button`
  display: flex;
  align-items: center;
  justify-content: center;
  gap: 4px;
  width: 95px;
  height: 28px;
  font-size: 11px;
  background: #fff;
`;
const GraphCanvas = styled.div`
  display: flex;
  flex: 1;
  min-height: 0;
  justify-content: flex-end;
  align-items: flex-end;
  overflow: hidden;
  background: #fff;
`;
const GraphSvg = styled.svg`
  display: block;
  flex: none;
  width: 640px;
  height: 600px;
`;
const BottomBar = styled.div`
  display: flex;
  flex: none;
  align-items: center;
  height: 36px;
  padding: 0 0 2px 6px;
`;
const Range = styled.input`
  appearance: none;
  flex: none;
  width: 72px;
  height: 18px;
  margin: 0 ${(p) => p.$m}px;
  background: linear-gradient(#8a8a8a, #c4c4c4) center / 100% 5px no-repeat;
  &::-webkit-slider-thumb {
    appearance: none;
    width: 17px;
    height: 17px;
    border: 1px solid #8b8b8b;
    border-radius: 50%;
    background: linear-gradient(#fff, #e6e6e6);
  }
`;
const Serif = styled.b`
  font-family: "Liberation Serif", serif;
  font-size: ${(p) => (p.$shadow ? 12 : 14)}px;
  color: ${(p) => p.$c};
  ${(p) => p.$shadow && "padding-right: 4px; text-shadow: 4px 1px #c4c4c4;"}
`;
const Swatch = styled.button`
  width: 16px;
  height: 16px;
  background: #000;
`;
const Caret = styled.i`
  border: 3px solid transparent;
  border-top: 4px solid #4a5568;
  border-bottom: 0;
`;

/* ---------- right side ---------- */
const Facts = styled.dl`
  margin: 0;
  padding: 3px 7px;
  line-height: 22px;
  div { display: flex; }
  dt { width: 55px; font-weight: 700; }
  dd { margin: 0; }
`;
const ContextBody = styled.div`
  display: flex;
  justify-content: space-between;
  padding-right: 10px;
  svg { margin-top: 8px; }
`;
const StatsLead = styled.div`
  flex: none;
  height: 11px;
  background: #fff;
  border-top: 1px solid #b9c4ec;
`;
const StatsGroup = styled.button`
  display: flex;
  flex: none;
  align-items: center;
  gap: 5px;
  height: 20px;
  padding: 0 0 1px 5px;
  font-size: 13px;
  line-height: 18px;
  background: #f9f9f9;
  border-top: 1px solid #dde1f5;
`;
const Expander = styled.i`
  display: grid;
  place-items: center;
  width: 9px;
  height: 9px;
  border: 1px solid #777;
  &::before { content: ""; border: 2px solid transparent; border-left: 3px solid #333; border-right: 0; }
`;
const StatsRest = styled.div`
  flex: 1;
  background: #aeaeae;
`;
const StatusBar = styled.footer`
  display: flex;
  flex: none;
  align-items: center;
  justify-content: flex-end;
  height: 25px;
  padding-right: 17px;
  background: #aeaeae;
  border-top: 1px solid #444;
`;
const WorkspaceIcon = styled.i`
  width: 16px;
  height: 12px;
  margin-right: 7px;
  border: 1px solid #ddd;
  background: #fff;
`;
const WorkspaceName = styled.span`
  margin-right: 7px;
  font-size: 11px;
`;
const PageButton = styled.button`
  width: 22px;
  height: 13px;
  font: 8px/10px "DejaVu Sans", sans-serif;
  color: #8a8a8a;
  border: 1px solid #999;
  background: #c4c4c4;
`;
const TaskName = styled.span`
  margin: 0 8px 0 9px;
`;
const Progress = styled.div`
  width: 200px;
  height: 17px;
  border: 1px solid #888;
  border-radius: 1px;
  background: repeating-linear-gradient(45deg, transparent 0 11px, #f2f2f2 11px 23px),
    linear-gradient(#a9c9f5, #4f9dee 50%, #9bd3fb);
`;
const CancelTask = styled.button`
  width: 11px;
  height: 11px;
  margin: 0 19px 0 5px;
  font: 700 9px/9px "DejaVu Sans", sans-serif;
  border: 1px solid #7f93a8;
  background: #fff;
`;

/* ---------- dock ---------- */
const Dock = styled.nav`
  position: absolute;
  bottom: 0;
  left: 50%;
  transform: translateX(-50%);
  display: flex;
  align-items: flex-start;
  width: 496px;
  height: 20px;
  padding: 1px 6px 0 6px;
  &::before {
    content: "";
    position: absolute;
    inset: 4px 0 0 0;
    clip-path: polygon(7px 0, calc(100% - 7px) 0, 100% 11px, 100% 100%, 0 100%, 0 11px);
    background: linear-gradient(#8c97ac, #aab0bd 10px, #f3f3f3 11px, #999 13px, #8a8a8a);
  }
`;
const DockItem = styled.button`
  position: relative;
  flex: none;
  display: grid;
  place-items: center;
  width: 16px;
  height: 14px;
  margin-left: ${(p) => (p.$gap ? 8 : 0)}px;
  color: #fff;
  &::after {
    content: "";
    position: absolute;
    top: 16px;
    width: 6px;
    height: 3px;
    border-radius: 2px;
    background: ${(p) => (p.$run ? "#e9f8ff" : "transparent")};
  }
`;
const DockTile = styled.i`
  display: grid;
  place-items: center;
  width: ${(p) => (p.$wide ? 14 : 12)}px;
  height: ${(p) => (p.$wide ? 10 : 12)}px;
  border-radius: ${(p) => (p.$round ? 6 : 1)}px;
  font: 700 10px/12px "Noto Sans", sans-serif;
  background: ${(p) => p.$bg};
  color: ${(p) => p.$fg || "#fff"};
`;

/* ---------- data ---------- */
const menus = ["gephi", "File", "Workspace", "View", "Tools", "Window", "Plugins", "Help"];
const trayLeft = ["drive", "hangouts", "bell", "teamviewer", "badge", "ring", "screens", "folder", "dropbox"];
const trayRight = ["wave", "clock", "wifi", "eject", "keys", "volume"];
const properties = [
  ["Threads number", "2"],
  ["Behavior Alternatives"],
  ["Dissuade Hubs", false],
  ["LinLog mode", false],
  ["Prevent Overlap", false],
  ["Edge Weight Influence", "1.0"],
  ["Tuning"],
  ["Scaling", "2.0"],
  ["Stronger Gravity", false],
  ["Gravity", "1.0"],
  ["Performance"],
  ["Tolerance (speed)", "1000.0"],
  ["Approximate Repulsion", true],
  ["Approximation", "1.2"],
];
const processes = [
  ["3", "teo"], ["5", "teo"], ["6", "teo"], ["3", "_window"], ["0", "root"], ["6", "teo"], ["8", "teo"], ["5", "root"],
  ["0", "teo"], ["9", "teo"], ["1", "teo"], ["0", "teo"], ["8", "_coreaud"], ["9", "teo"], ["1", "teo"], ["6", "teo"],
  ["7", "teo"], ["9", "teo"], ["8", "teo"], ["6", "root"], ["0", "teo"], ["2", "teo"], ["8", "teo"],
];
const downloads = [
  ["file", "graphml_lep.zip"],
  ["file", "dirkbaechle-dottoxml....zip"],
  ["disk", "gephi-0.8.2-beta.dmg"],
  ["disk", "SourceTree_2.0.5.2.dmg"],
];
const tools = ["brush", "gem", "bucket", "pencil", "pencil", "plane", "heat", "help"];
const dockItems = [
  { bg: "linear-gradient(90deg,#5b86d8 50%,#dfe8f6 50%)", run: 1 },
  { bg: "radial-gradient(#444 25%,#bbb 30%)", round: 1 },
  { bg: "radial-gradient(#a050b0 30%,#eee 35%,#9a4fb0 70%)", round: 1, run: 1 },
  { bg: "repeating-linear-gradient(90deg,#3f7dc0 0 2px,#9ab 2px 4px)", run: 1 },
  { bg: "radial-gradient(#dde 20%,#4b8fd0 60%,#ccc)", round: 1, run: 1 },
  { bg: "radial-gradient(#3b7de0 25%,#fff 27% 36%,transparent 38%),conic-gradient(#dc4437 0 60deg,#f7cb3a 60deg 180deg,#3aa757 180deg 300deg,#dc4437 300deg)", round: 1, run: 1 },
  { bg: "linear-gradient(#5db4f7,#e8f5ff)", round: 1, run: 1 },
  { bg: "#1ba6ee", round: 1, t: "S" },
  { bg: "linear-gradient(#d8b980,#b8925a)" },
  { bg: "radial-gradient(#7cc0ff,#2566c4)", round: 1, t: "A", run: 1 },
  { bg: "radial-gradient(#ff6c8d,#e62447)", round: 1, t: "♫", run: 1 },
  { bg: "radial-gradient(#eee 20%,#555 25% 50%,#bbb 55%)", run: 1 },
  { bg: "transparent", fg: "#1c62b8", t: "W" },
  { bg: "transparent", fg: "#1f9a2c", t: "X" },
  { bg: "linear-gradient(135deg,#3d5f96 50%,#c0262c 50%)" },
  { bg: "#35a7e0", round: 1, t: "➤", run: 1 },
  { bg: "conic-gradient(#f28c28 0 50%,#7aa34a 0 70%,#e8751a 0)", round: 1, run: 1 },
  { bg: "#23262a", t: "›", run: 1 },
  { bg: "radial-gradient(#1c4e80,#0b1626 70%)", round: 1, run: 1 },
  { bg: "linear-gradient(120deg,#fafafa 60%,#999)", run: 1 },
  { bg: "radial-gradient(#fff 35%,#1d6fe8 40%)", run: 1 },
  { bg: "transparent", fg: "#f2c21c", t: "W", run: 1 },
  { bg: "#222", t: "φ", run: 1 },
  { bg: "linear-gradient(#fff,#e2e2e2)", wide: 1, gap: 1 },
  { bg: "linear-gradient(#eee 30%,#fff 30%)", wide: 1 },
  { bg: "#f4f4f4", wide: 1 },
  { bg: "#fafafa", wide: 1 },
  { bg: "linear-gradient(#fff 60%,#222 60% 70%,#ddd 70%)", wide: 1 },
  { bg: "#e9e9e9", wide: 1 },
  { bg: "linear-gradient(90deg,#555,#aaa,#555)" },
];

/* Force directed node cloud: pixel dust plus short radial strokes for leaf clusters. */
function buildCloud() {
  let seed = 20131;
  const rnd = () => {
    seed = (seed * 1664525 + 1013904223) >>> 0;
    return seed / 4294967296;
  };
  const cx = 354;
  const cy = 387;
  const layers = { light: [], mid: [], dark: [] };
  const put = (layer, x, y, w = 1, h = 1) => layers[layer].push(`M${x | 0} ${y | 0}h${w}v${h}h-${w}z`);
  const lobes = Array.from({ length: 90 }, () => 0.94 + rnd() * 0.14);
  for (let y = 70; y < 600; y++) {
    for (let x = 40; x < 640; x++) {
      const dx = x - cx;
      const dy = y - cy;
      const a = ((Math.atan2(dy, dx) + Math.PI) / (2 * Math.PI)) * 90;
      const r = Math.hypot(dx, dy) / lobes[Math.floor(a) % 90];
      const p = 0.62 * Math.exp(-((r / 112) ** 2.2)) + (r < 165 ? 0.03 : 0.03 * Math.exp(-(r - 165) / 9));
      if (rnd() < p) {
        const k = rnd();
        const depth = Math.exp(-((r / 105) ** 2));
        put(k < 0.24 * depth + 0.01 ? "dark" : k < 0.66 * depth + 0.1 ? "mid" : "light", x, y);
      }
    }
  }
  const strokes = [];
  for (let i = 0; i < 820; i++) {
    const a = rnd() * Math.PI * 2;
    const r = 40 + Math.sqrt(rnd()) * 140 + (rnd() < 0.12 ? rnd() * 34 : 0);
    const len = 1 + rnd() * rnd() * 6;
    const x = cx + Math.cos(a) * r;
    const y = cy + Math.sin(a) * r;
    strokes.push(`M${x.toFixed(1)} ${y.toFixed(1)}l${(Math.cos(a) * len).toFixed(1)} ${(Math.sin(a) * len).toFixed(1)}`);
  }
  for (let i = 0; i < 100; i++) {
    const a = rnd() * Math.PI * 2;
    const r = 180 + rnd() * rnd() * 110;
    const x = cx + Math.cos(a) * r;
    const y = cy + Math.sin(a) * r;
    put(rnd() < 0.4 ? "mid" : "light", x, y, rnd() < 0.4 ? 2 : 1, 1);
  }
  const hubs = Array.from({ length: 130 }, () => {
    const a = rnd() * Math.PI * 2;
    const r = 20 + rnd() * 130;
    return [Math.round(cx + Math.cos(a) * r), Math.round(cy + Math.sin(a) * r), 1 + rnd()];
  });
  const knot = [];
  for (let i = 0; i < 110; i++) {
    const a = rnd() * Math.PI * 2;
    const r = rnd() * 9;
    knot.push(`M${(428 + Math.cos(a) * r) | 0} ${(406 + Math.sin(a) * r * 0.8) | 0}h1v1h-1z`);
  }
  return {
    light: layers.light.join(""),
    mid: layers.mid.join(""),
    dark: layers.dark.join(""),
    strokes: strokes.join(""),
    knot: knot.join(""),
    hubs,
  };
}
const cloud = buildCloud();

const NodeCloud = () => (
  <GraphSvg viewBox="0 0 640 600" role="img" aria-label="Graph">
    <g shapeRendering="crispEdges">
      <path d={cloud.light} fill="#c4c4c4" />
      <path d={cloud.mid} fill="#8f8f8f" />
      <path d={cloud.dark} fill="#454545" />
      <path d={cloud.knot} fill="#4c4c4c" />
    </g>
    <path d={cloud.strokes} stroke="#6c6c6c" strokeWidth="1.400" fill="none" />
    {cloud.hubs.map(([x, y, r], i) => (
      <circle key={i} cx={x} cy={y} r={r} fill="#8c8c8c" />
    ))}
    <circle cx="334" cy="361" r="3" fill="#8f8f8f" />
    <ellipse cx="333" cy="381" rx="3" ry="4" fill="#8f8f8f" />
    <circle cx="374" cy="396" r="3" fill="#8f8f8f" />
    <circle cx="307" cy="413" r="3" fill="#8f8f8f" />
  </GraphSvg>
);

const GephiMark = () => (
  <svg viewBox="0 0 34 28" width="34" height="28" fill="none" stroke="#111" strokeLinecap="round" aria-label="Gephi">
    <path d="M9 6C4 5 5 13 11 14c5 0 9-3 11-8" strokeWidth=".9" />
    <path d="M26 6c1-3-4-3-8 1-4 5-5 10-2 11 3 0 6-4 8-9" strokeWidth="1.300" />
    <path d="M13 14c-6 0-8 7-4 9 5 1 9-6 14-14" strokeWidth=".9" />
    <path d="M22 13c-3 3-3 8-1 8 3 0 2-8 5-8 4 0 2 8-3 8" strokeWidth="1.500" />
    <path d="M25 13l-2 12" strokeWidth="1.300" />
  </svg>
);

const PropertyRow = ({ item: [label, value] }) => {
  const id = label.replace(/\W+/g, "-").toLowerCase();
  if (value === undefined) {
    return (
      <tr>
        <th colSpan={2}><GroupButton>{label}</GroupButton></th>
      </tr>
    );
  }
  return (
    <tr>
      <th scope="row">{typeof value === "boolean" ? <label htmlFor={id}>{label}</label> : label}</th>
      <td>
        {typeof value === "boolean" ? (
          <CheckCell>
            <Check type="checkbox" id={id} defaultChecked={value} />
            {value && (
              <Svg $size={16} viewBox="0 0 16 16"><path d="M3.500 8l3 4.500L13 1.500" fill="none" stroke="#0b1d3c" strokeWidth="2.400" /></Svg>
            )}
          </CheckCell>
        ) : (
          value
        )}
      </td>
    </tr>
  );
};

const LeftColumn = () => (
  <Column $w={344}>
    <Panel $h={330}>
      <TabBar role="tablist">
        <Tab role="tab" $pad={14}>Partition</Tab>
        <Tab role="tab" $on>Ranking <Close /></Tab>
        <RestoreButton />
      </TabBar>
      <Row $h={31} $line $p="0 1px 0 0">
        <Toggle $on $w={48}>Nodes</Toggle>
        <Toggle $w={46}>Edges</Toggle>
        <Dotted $m={5} />
        <Push />
        <Toggle $on aria-label="Color"><Wheel /></Toggle>
        <Toggle aria-label="Size"><Icon name="gemRed" /></Toggle>
        <Toggle aria-label="Label color"><Icon name="labelColor" /></Toggle>
        <Toggle aria-label="Label size"><Icon name="labelSize" /></Toggle>
      </Row>
      <SelectWrap $m="6px 10px 0 9px">
        <Select $pad={7} aria-label="Rank parameter"><option>---Choose a rank parameter</option></Select>
      </SelectWrap>
      <ListActions>
        <button aria-label="Result list"><Icon name="tableSmall" /></button>
        <button aria-label="Filter"><Icon name="funnel" /></button>
      </ListActions>
    </Panel>
    <Panel>
      <TabBar role="tablist" $h={20}>
        <Tab role="tab" $on $accent>Layout <Close /></Tab>
        <RestoreButton />
      </TabBar>
      <SelectWrap $m="12px 10px 0 9px" $off>
        <Select $pad={12} disabled aria-label="Layout algorithm"><option>ForceAtlas 2</option></Select>
      </SelectWrap>
      <Row $h={56} $p="13px 8px 0 6px">
        <Icon name="info" />
        <StopButton><Icon name="stop" size={12} />Stop</StopButton>
      </Row>
      <PropertyPane>
        <PropertyClip>
          <PropertyTable>
            <colgroup><col width="159" /><col /></colgroup>
            <tbody>{properties.map((p) => <PropertyRow key={p[0]} item={p} />)}</tbody>
          </PropertyTable>
        </PropertyClip>
        <PaneScroll />
      </PropertyPane>
      <Description>
        <strong>ForceAtlas 2</strong>
        <HelpButton aria-label="Help">?</HelpButton>
      </Description>
      <Row $h={24} $p="0 0 0 4px">
        <SmallButton $w={77}><Corner />&nbsp;Presets...</SmallButton>
        <SmallButton $w={42}>Reset</SmallButton>
      </Row>
    </Panel>
  </Column>
);

const GraphColumn = () => (
  <Column>
    <Panel>
      <TabBar role="tablist" $flat>
        <Tab role="tab" $on $pad={8}>Graph <Push /><Close /></Tab>
        <Push />
        <NavButton aria-label="Scroll left">◀</NavButton>
        <NavButton aria-label="Scroll right">▶</NavButton>
        <NavButton $w={20} $ml={4} aria-label="Show list">▼</NavButton>
      </TabBar>
      <GraphBody>
        <ToolStrip>
          <LogoCell><GephiMark /></LogoCell>
          <Toggle aria-label="Select"><Icon name="arrow" /></Toggle>
          <Toggle aria-label="Rectangle selection"><Icon name="marquee" size={15} /></Toggle>
          <Toggle $on aria-label="Drag"><Icon name="hand" size={15} /></Toggle>
          <ToolDots />
          {tools.map((t, i) => <Toggle key={i} aria-label={t}><Icon name={t} size={15} /></Toggle>)}
          <StripButtons>
            {["zoomFit", "square"].map((n) => <SmallButton $stack key={n} $w={28} aria-label={n}><Icon name={n} size={15} /></SmallButton>)}
            <SmallButton $stack $w={28} $font={9}>size</SmallButton>
            <SmallButton $stack $w={28} aria-label="Label color"><Icon name="aPink" size={15} /></SmallButton>
            <SmallButton $stack $w={28}><Serif $shadow $c="#333">A</Serif></SmallButton>
            <SmallButton $stack $w={28} aria-label="Label size"><Icon name="aSize" size={15} /></SmallButton>
          </StripButtons>
        </ToolStrip>
        <GraphMain>
          <GraphStatus>
            <span>Dragging</span>
            <Hierarchy><Icon name="bulbGold" size={14} /><span>Hierarchy</span></Hierarchy>
          </GraphStatus>
          <GraphCanvas><NodeCloud /></GraphCanvas>
        </GraphMain>
      </GraphBody>
      <BottomBar>
        <Dotted />
        <Gap $w={4} />
        <SmallButton $w={28} $h={21} aria-label="Background"><Icon name="bulb" size={17} /></SmallButton>
        <SmallButton $w={40} $h={21} aria-label="Screenshot"><Icon name="camera" size={17} /><Caret /></SmallButton>
        <Dotted $m={5} />
        <Toggle aria-label="Node labels"><Icon name="bigT" /></Toggle>
        <Toggle $on aria-label="Hulls"><Icon name="hull" /></Toggle>
        <Dotted $m={5} />
        <Toggle $on aria-label="Edges"><Icon name="edge" /></Toggle>
        <Toggle $on aria-label="Edge color"><Icon name="rainbowEdge" /></Toggle>
        <Toggle aria-label="Edge labels"><Icon name="ghostT" /></Toggle>
        <Range $m={14} type="range" defaultValue="10" aria-label="Edge weight" />
        <Gap $w={5} />
        <Dotted />
        <Gap $w={5} />
        <SmallButton $w={28} aria-label="Label size mode"><Serif $c="#333">A-</Serif></SmallButton>
        <SmallButton $w={28} aria-label="Label color mode"><Serif $c="#4a6ad0">A-</Serif></SmallButton>
        <SmallButton $w={104} $h={18}>Arial-BoldMT, 32</SmallButton>
        <Range $m={14} type="range" defaultValue="50" aria-label="Font size" />
        <Swatch aria-label="Label color" />
        <SmallButton $w={28} aria-label="Attributes"><Icon name="clipboard" /></SmallButton>
        <Push />
        <Toggle aria-label="Open settings"><Icon name="pullUp" size={12} /></Toggle>
      </BottomBar>
    </Panel>
  </Column>
);

const RightColumn = () => (
  <Column $w={304}>
    <Panel $h={90}>
      <TabBar role="tablist">
        <Tab role="tab" $on>Context <Close /></Tab>
        <RestoreButton />
      </TabBar>
      <ContextBody>
        <Facts>
          <div><dt>Nodes:</dt><dd>180489</dd></div>
          <div><dt>Edges:</dt><dd>188203</dd></div>
          <div>Directed Graph</div>
        </Facts>
        <Icon name="pie" size={17} />
      </ContextBody>
    </Panel>
    <Panel>
      <TabBar role="tablist" $h={20}>
        <Tab role="tab" $on>Statistics <Close /></Tab>
        <Tab role="tab" $pad={13}>Filters</Tab>
        <RestoreButton />
      </TabBar>
      <Row $h={18} $line><SmallButton $w={55} $h={18}>Settings</SmallButton></Row>
      <StatsLead />
      {["Network Overview", "Node Overview", "Edge Overview"].map((s) => (
        <StatsGroup key={s}><Expander />{s}</StatsGroup>
      ))}
      <StatsRest />
    </Panel>
  </Column>
);

export default function App() {
  return (
    <>
      <GlobalStyle />
      <MenuBar>
        <Icon name="apple" size={18} />
        <MenuList>
          {menus.map((m, i) => <MenuItem key={m} $strong={i === 0}>{m}</MenuItem>)}
        </MenuList>
        <StatusItems>
          {trayLeft.map((n) => <Slot key={n} $w={28}><Icon name={n} /></Slot>)}
          <Slot $w={80} $gap={6}><Rates><span>0 kB/s</span><span>0 kB/s</span></Rates><Icon name="net" /></Slot>
          <Slot $w={94} $gap={2} $font={12}><Icon name="orb" />N/A / 0 RPM</Slot>
          {trayRight.map((n) => <Slot key={n} $w={29}><Icon name={n} size={n === "wifi" ? 18 : 15} /></Slot>)}
          <Slot $w={84}>Sun 16:39</Slot>
          <Slot $w={162} $strong>Teodoro Fields Collin</Slot>
          <Slot $w={50}><Icon name="search" size={15} /></Slot>
          <Slot $w={21}><Icon name="list" size={18} /></Slot>
          <Slot $w={20} />
        </StatusItems>
      </MenuBar>
      <Desktop>
        <MonitorWindow>
          <MonitorHead><button>k</button></MonitorHead>
          <ProcessList>
            <ProcessTable>
              <colgroup><col width="84" /><col width="53" /><col /></colgroup>
              <thead><tr><th /><th>User</th><th /></tr></thead>
              <tbody>
                {processes.map(([n, user], i) => <tr key={i}><td>{n}</td><td>{user}</td><td /></tr>)}
              </tbody>
            </ProcessTable>
          </ProcessList>
          <Strip $h={15} />
          <Totals>
            <div><dt>Threads:</dt><dd>2238</dd></div>
            <div><dt>Processes:</dt><dd>302</dd></div>
          </Totals>
          <Strip $h={14} />
        </MonitorWindow>
        <DesktopIcons>
          <DesktopIcon>
            <svg width="58" height="62" viewBox="0 0 58 62" aria-hidden="true">
              <path d="M2 13 29 2l27 11-2 27-25 20L4 40z" fill="#f2f2f2" />
              <path d="M2 13l27 15v32L4 40z" fill="#f6f6f6" />
              <path d="M56 13 29 28v32l25-20z" fill="#e6e6e6" />
              {[[29, 6], [15, 11], [43, 11], [29, 19]].map(([x, y]) => (
                <g key={x + "-" + y}>
                  <ellipse cx={x} cy={y + 2} rx="8" ry="4" fill="#bbb" />
                  <ellipse cx={x} cy={y} rx="8" ry="4" fill="#fafafa" stroke="#ccc" strokeWidth=".5" />
                </g>
              ))}
            </svg>
            HDAEnabler.dylib
          </DesktopIcon>
          <DesktopIcon>
            <svg width="58" height="62" viewBox="0 0 58 62" aria-hidden="true">
              <path d="M8 2h42q2 0 2 2l4 46H2L6 4q0-2 2-2z" fill="#f8f8f8" />
              <path d="M4 44h50" stroke="#ddd" />
              <rect x="2" y="49" width="54" height="10" rx="3" fill="#d6d6d6" />
              <rect x="7" y="52" width="44" height="4" rx="2" fill="#666" />
            </svg>
            Untitled 1
          </DesktopIcon>
        </DesktopIcons>
        <BackWindow>
          <DarkHead $pad={11}>
            <HeadRow $h={38}><Dot /></HeadRow>
            <HeadRow $h={32}><Icon name="back" size={13} /></HeadRow>
            <HeadRow $h={20}><Icon name="bookFolder" size={13} /></HeadRow>
          </DarkHead>
          <BackToolbar />
          <BackBody>
            <RedMark />
            <Outline>
              <OutlineMark $after={78} />
              <OutlineMark $after={358} />
              <OutlineMark $after={0} />
            </Outline>
          </BackBody>
        </BackWindow>
        <BrowserWindow>
          <DarkHead $pad={12}>
            <HeadRow $h={38} $gap={8}><Dot /><Dot /></HeadRow>
            <HeadRow $h={32}><Icon name="back" size={15} /></HeadRow>
            <HeadRow $h={20} $gap={4}><Icon name="bookFolder" size={14} />f</HeadRow>
          </DarkHead>
          <BrowserPage>
            <Article>
              <p>
                The tutorial uses the <a href="#les">LesMiserables</a>, <a href="#air">Airlines</a> and <a href="#core">Internet Core Routers</a> sample datasets. You can find other <a href="#net">network datasets</a> on the
                <br />wiki.
              </p>
              <p><b>Syllabus:</b></p>
            </Article>
            <PageScroll />
          </BrowserPage>
          <DownloadBar>
            {downloads.map(([icon, name]) => (
              <Download key={name}>
                <DownloadName><Icon name={icon} size={14} />{name}</DownloadName>
                <DownloadMore aria-label={"Options for " + name}>▼</DownloadMore>
              </Download>
            ))}
            <ShowAll><Icon name="downArrow" size={14} />Show All</ShowAll>
            <CloseBar aria-label="Close downloads">×</CloseBar>
          </DownloadBar>
        </BrowserWindow>
        <GephiShadow />
        <GephiWindow>
          <TitleBar>
            <Lights>
              <Light $c="#e0443e" aria-label="Close" />
              <Light $c="#eba13a" aria-label="Minimize" />
              <Light $c="#6cb840" aria-label="Zoom" />
            </Lights>
            <Title>Gephi 0.8.1 beta – Project 0</Title>
            <Lights />
          </TitleBar>
          <Banner>
            <ModeButton $on><Icon name="globe" /><span>Overview</span></ModeButton>
            <ModeButton><Icon name="table" /><span>Data Laboratory</span></ModeButton>
            <ModeButton><Icon name="monitor" /><span>Preview</span></ModeButton>
            <BannerLogo viewBox="0 0 150 45" fill="none" stroke="#060606" aria-label="Gephi">
              <path d="M5 0C8 14 22 25 34 24 52 23 64 14 74 0" strokeWidth="2.500" />
              <path d="M51-2C40 18 46 39 62 39 78 38 84 18 108 10" strokeWidth="2.500" />
              <path d="M47-1h10C50 9 47 22 50 32 42 24 41 10 47-1z" fill="#060606" stroke="none" />
              <path d="M14 46C16 28 44 28 46 46" strokeWidth="2.500" />
              <path d="M82 0c2 9 20 13 29-1M119 7c4-1 8-4 10-8" strokeWidth="2.500" />
              <path d="M112 10C96 14 88 30 86 46h14c0-16 4-28 12-36z" fill="#060606" stroke="none" />
              <path d="M108 46c2-24 10-37 22-37 16 0 18 20 8 37h-13c10-16 10-31 5-33-6-1-13 12-15 33z" fill="#060606" stroke="none" />
            </BannerLogo>
          </Banner>
          <Workspace>
            <LeftColumn />
            <GraphColumn />
            <RightColumn />
          </Workspace>
          <StatusBar>
            <WorkspaceIcon />
            <WorkspaceName>Workspace 0</WorkspaceName>
            <PageButton aria-label="Previous workspace">◀</PageButton>
            <PageButton aria-label="Next workspace">▶</PageButton>
            <TaskName>ForceAtlas 2</TaskName>
            <Progress role="progressbar" aria-label="ForceAtlas 2" />
            <CancelTask aria-label="Cancel">×</CancelTask>
            <Icon name="refresh" />
          </StatusBar>
        </GephiWindow>
        <Dock>
          {dockItems.map((d, i) => (
            <DockItem key={i} $run={d.run} $gap={d.gap} aria-label={"Dock item " + (i + 1)}>
              <DockTile $bg={d.bg} $fg={d.fg} $round={d.round} $wide={d.wide}>{d.t}</DockTile>
            </DockItem>
          ))}
        </Dock>
      </Desktop>
    </>
  );
}
